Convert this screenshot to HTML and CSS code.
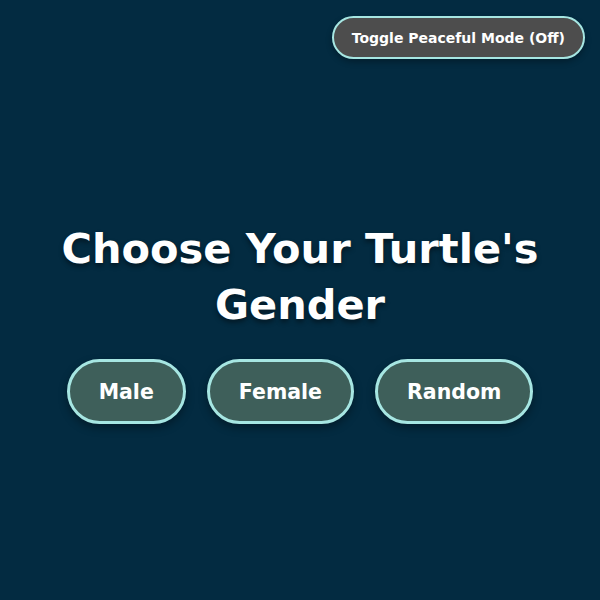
FILE: index.html
```html
<!DOCTYPE html>
<html>
<head>
<meta charset="utf-8">
<link rel="stylesheet" href="styles.css">
</head>
<body>
<div class="page">
  <header class="topbar">
    <button class="toggle">Toggle Peaceful Mode (Off)</button>
  </header>
  <main class="main">
    <h1 class="title">Choose Your Turtle's<br>Gender</h1>
    <div class="choices">
      <button class="choice">Male</button>
      <button class="choice">Female</button>
      <button class="choice">Random</button>
    </div>
  </main>
</div>
</body>
</html>
```
FILE: styles.css
```css
html, body {
  margin: 0;
  padding: 0;
  background: #032b41;
}
.page {
  width: 600px;
  height: 600px;
  display: flex;
  flex-direction: column;
  font-family: "DejaVu Sans", "Noto Sans", sans-serif;
  color: #fff;
}
.topbar {
  display: flex;
  justify-content: flex-end;
  padding: 16px 15px 0 0;
}
.toggle {
  height: 43px;
  padding: 0 18px;
  border-radius: 22px;
  border: 2px solid #a6e6e2;
  background: #4d4d4d;
  color: #fff;
  font-family: inherit;
  font-weight: bold;
  font-size: 14px;
  box-shadow: 0 3px 6px rgba(0,0,0,0.3);
}
.main {
  display: flex;
  flex-direction: column;
  align-items: center;
  padding-top: 162px;
}
.title {
  margin: 0;
  text-align: center;
  font-size: 41.5px;
  line-height: 56px;
  font-weight: bold;
  text-shadow: 0 3px 5px rgba(0,0,0,0.45);
}
.choices {
  display: flex;
  gap: 21px;
  margin-top: 26px;
}
.choice {
  height: 65px;
  padding: 0 29px;
  border-radius: 33px;
  border: 3px solid #a6e6e2;
  background: #3e5f5a;
  color: #fff;
  font-family: inherit;
  font-weight: bold;
  font-size: 20.5px;
  box-shadow: 0 4px 8px rgba(0,0,0,0.35);
}
```
